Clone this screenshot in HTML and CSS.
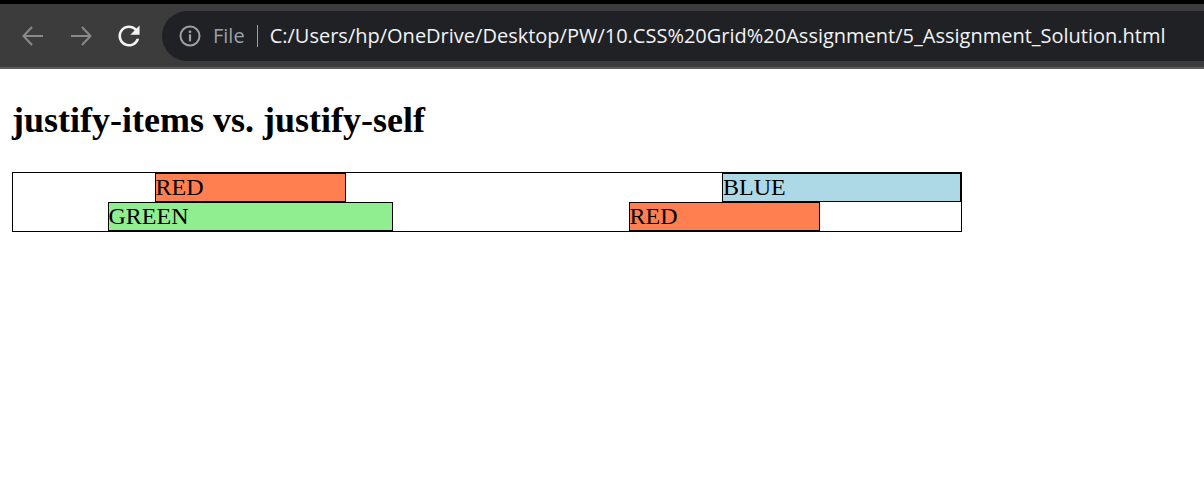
FILE: index.html
```html
<!DOCTYPE html>
<html>
<head>
<meta charset="utf-8">
<title>justify-items vs. justify-self</title>
<link rel="stylesheet" href="styles.css">
</head>
<body>
<div class="chrome">
  <div class="topstrip"></div>
  <div class="toolbar">
    <div class="nav">
      <svg class="navicon" width="24" height="24" viewBox="0 0 24 24"><path d="M22 12H2.5M11 3L2.5 12L11 21" fill="none" stroke="#8a8a8a" stroke-width="2"/></svg>
      <svg class="navicon" width="24" height="24" viewBox="0 0 24 24"><path d="M2 12H21.5M13 3L21.5 12L13 21" fill="none" stroke="#8a8a8a" stroke-width="2"/></svg>
      <svg class="navicon" width="24" height="24" viewBox="0 0 24 24"><path transform="translate(12 12) scale(1.32) translate(-12 -12)" d="M17.65 6.35C16.2 4.9 14.21 4 12 4c-4.42 0-7.99 3.58-7.99 8s3.57 8 7.99 8c3.73 0 6.84-2.55 7.73-6h-2.08c-.82 2.33-3.04 4-5.65 4-3.31 0-6-2.69-6-6s2.69-6 6-6c1.66 0 3.14.69 4.22 1.78L13 11h7V4l-2.35 2.35z" fill="#f1f3f4"/></svg>
    </div>
    <div class="omnibox">
      <svg class="info" width="22" height="22" viewBox="0 0 22 22"><circle cx="11" cy="11" r="9.5" fill="none" stroke="#9aa0a6" stroke-width="2"/><circle cx="11" cy="6.8" r="1.4" fill="#9aa0a6"/><rect x="9.9" y="9.3" width="2.2" height="7" fill="#9aa0a6"/></svg>
      <span class="scheme">File</span>
      <span class="sep"></span>
      <span class="url">C:/Users/hp/OneDrive/Desktop/PW/10.CSS%20Grid%20Assignment/5_Assignment_Solution.html</span>
    </div>
  </div>
  <div class="bottomline"></div>
</div>
<div class="page">
  <h2 class="title">justify-items vs. justify-self</h2>
  <div class="grid">
    <div class="item red w-red">RED</div>
    <div class="item blue w-blue self-end">BLUE</div>
    <div class="item green w-green">GREEN</div>
    <div class="item red w-red">RED</div>
  </div>
</div>
</body>
</html>
```
FILE: styles.css
```css
html, body {
  margin: 0;
  padding: 0;
  background: #ffffff;
}

.chrome {
  display: flex;
  flex-direction: column;
  overflow: hidden;
}

.topstrip {
  height: 4px;
  background: #000000;
}

.toolbar {
  height: 63px;
  background: #3c3c3c;
  display: flex;
  align-items: center;
}

.bottomline {
  height: 2px;
  background: #5c5c5c;
}

.nav {
  display: flex;
  align-items: center;
  padding-left: 21px;
  gap: 24px;
  width: 162px;
  box-sizing: border-box;
  flex-shrink: 0;
}

.navicon {
  display: block;
}

.omnibox {
  flex: 1 0 auto;
  height: 50px;
  margin-right: -60px;
  background: #202124;
  border-radius: 25px;
  display: flex;
  align-items: center;
  padding-left: 17px;
  font-family: "Open Sans", "Noto Sans", sans-serif;
  font-size: 20px;
  white-space: nowrap;
}

.info {
  display: block;
  flex-shrink: 0;
}

.scheme {
  color: #9aa0a6;
  margin-left: 12px;
}

.sep {
  width: 1px;
  height: 22px;
  background: #9aa0a6;
  margin-left: 12px;
  margin-right: 12px;
}

.url {
  color: #f1f3f4;
}

.page {
  padding: 31px 12px 0 12px;
}

.title {
  margin: 0 0 31px 0;
  font-family: "Liberation Serif", "Times New Roman", serif;
  font-size: 36px;
  line-height: 41px;
  font-weight: bold;
  color: #000000;
}

.grid {
  display: grid;
  grid-template-columns: 1fr 1fr;
  grid-template-rows: 29px 29px;
  justify-items: center;
  width: 950px;
  box-sizing: border-box;
  border: 1px solid #000000;
}

.item {
  box-sizing: border-box;
  border: 1px solid #000000;
  font-family: "Liberation Serif", "Times New Roman", serif;
  font-size: 24px;
  line-height: 27px;
  color: #000000;
}

.red { background: #ff7f50; }
.blue { background: #add8e6; }
.green { background: #90ee90; }

.w-red { width: 191px; }
.w-blue { width: 239px; }
.w-green { width: 285px; }

.self-end { justify-self: end; }
```
